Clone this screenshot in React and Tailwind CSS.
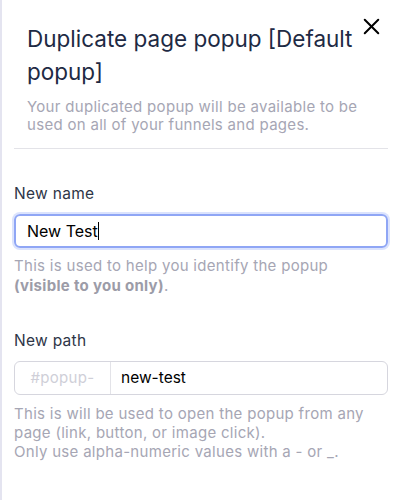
import { X } from "lucide-react";

export default function App() {
  return (
    <div
      className="w-[400px] h-[500px] bg-white border-l-2 border-[#e4e4f0] overflow-hidden"
      style={{ fontFamily: "Inter, 'Noto Sans', sans-serif" }}
    >
      {/* header */}
      <div className="relative pl-[25px] pr-[36px] pt-[22px]">
        <h2 className="text-[22.5px] leading-[33px] text-[#1e2a44] font-normal">
          Duplicate page popup [Default popup]
        </h2>
        <p className="mt-[10px] text-[15px] leading-[18px] tracking-[0.3px] text-[#a6a6b4]">
          Your duplicated popup will be available to be used on all of your
          funnels and pages.
        </p>
        <button className="absolute right-[15px] top-[13px] text-black">
          <X size={27} strokeWidth={1.8} />
        </button>
      </div>

      <div className="mx-[12px] mt-[14px] border-t border-[#e3e3e8]" />

      {/* form */}
      <div className="px-[12px] pt-[35px]">
        <label className="block text-[15.5px] leading-[20px] tracking-[0.3px] text-[#2e3547]">
          New name
        </label>
        <div className="mt-[10px] h-[34px] rounded-[6px] border-2 border-[#8fa6f5] ring-2 ring-[#dbe3fd] flex items-center px-[11px]">
          <span className="text-[16px] text-black">New Test</span>
          <span className="w-px h-[18px] bg-black" />
        </div>
        <p className="mt-[8px] text-[15px] leading-[20px] tracking-[0.3px] text-[#a6a6b4]">
          This is used to help you identify the popup
          <br />
          <span className="font-bold text-[#9c9ca8]">(visible to you only)</span>.
        </p>

        <label className="block mt-[35px] text-[15.5px] leading-[20px] tracking-[0.3px] text-[#2e3547]">
          New path
        </label>
        <div className="mt-[10px] h-[34px] rounded-[6px] border border-[#d6d6de] flex">
          <div className="w-[96px] flex items-center justify-center border-r border-[#e3e3e8] text-[15px] tracking-[0.3px] text-[#cfcfd8]">
            #popup-
          </div>
          <div className="flex items-center px-[10px] text-[15.5px] text-black">
            new-test
          </div>
        </div>
        <p className="mt-[9px] text-[15px] leading-[19px] tracking-[0.3px] text-[#a6a6b4]">
          This is will be used to open the popup from any page (link, button, or
          image click).
          <br />
          Only use alpha-numeric values with a - or _.
        </p>
      </div>
    </div>
  );
}
